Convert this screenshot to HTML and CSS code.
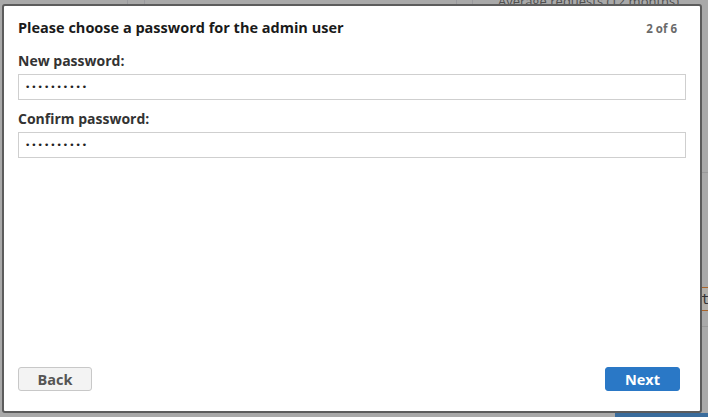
FILE: index.html
```html
<!DOCTYPE html>
<html>

<head>
  <title>Setup wizard</title>
  <link rel="stylesheet" href="styles.css">
</head>

<body>
  <div class="page">
    <div class="page-head">
      <span class="col col-a"></span>
      <span class="col col-b"></span>
      <span class="col col-c"></span>
      <span class="col col-d"></span>
      <span class="head-text">Average requests (12 months)</span>
    </div>
    <div class="page-side">
      <div class="side-row"></div>
      <div class="side-box">to</div>
      <div class="side-row last"></div>
    </div>
    <div class="page-foot"></div>
  </div>

  <div class="dialog">
    <div class="dialog-head">
      <h1>Please choose a password for the admin user</h1>
      <span class="step">2 of 6</span>
    </div>
    <form class="dialog-body">
      <label for="new-password">New password:</label>
      <input type="password" id="new-password" value="abcdefghij">
      <label for="confirm-password">Confirm password:</label>
      <input type="password" id="confirm-password" value="abcdefghij">
    </form>
    <div class="dialog-foot">
      <button class="btn btn-back">Back</button>
      <button class="btn btn-next">Next</button>
    </div>
  </div>
</body>

</html>
```
FILE: styles.css
```css
html {
  overflow: hidden;
}

body {
  margin: 0;
  width: 708px;
  height: 417px;
  overflow: hidden;
  position: relative;
  background: #a9a9a9;
  font-family: 'Open Sans', Lato, sans-serif;
}

/* page behind the wizard, dimmed */
.page {
  height: 417px;
  position: relative;
}

.page-head {
  height: 6px;
  display: flex;
  align-items: flex-end;
  overflow: hidden;
}

.col {
  width: 1px;
  height: 6px;
  background: #9a9a9e;
}

.col-a { margin-left: 127px; }
.col-b { margin-left: 16px; }
.col-c { margin-left: 311px; }
.col-d { margin-left: 15px; }

.head-text {
  margin-left: 25px;
  font-size: 13px;
  line-height: 10px;
  color: #505050;
}

.page-side {
  position: absolute;
  right: 0;
  top: 172px;
  width: 8px;
  display: flex;
  flex-direction: column;
}

.side-row {
  height: 1px;
  background: #999;
  margin-bottom: 115px;
}

.side-row.last {
  margin-bottom: 0;
}

.side-box {
  height: 22px;
  margin-bottom: 15px;
  margin-top: -1px;
  border-top: 1px solid #a8642a;
  border-bottom: 1px solid #a8642a;
  background: #b3b0aa;
  font-family: 'DejaVu Sans Mono', monospace;
  font-size: 14px;
  line-height: 22px;
  color: #333;
  text-indent: 1px;
  overflow: hidden;
}

.page-foot {
  position: absolute;
  left: 615px;
  right: 0;
  bottom: 0;
  height: 4px;
  background: #3a6c9c;
}

/* wizard dialog */
.dialog {
  position: absolute;
  left: 2px;
  top: 4px;
  width: 700px;
  height: 409px;
  background: #fff;
  border: 2px solid #5c5c5c;
  border-radius: 3px;
  display: flex;
  flex-direction: column;
  padding: 0 14px;
  box-sizing: border-box;
}

.dialog-head {
  display: flex;
  justify-content: space-between;
  align-items: baseline;
  padding-top: 12px;
}

.dialog-head h1 {
  margin: 0;
  font-size: 14.5px;
  font-weight: 700;
  color: #1a1a1a;
}

.step {
  font-size: 11.5px;
  font-weight: 700;
  color: #6a6a6a;
  margin-right: 9px;
}

.dialog-body {
  display: flex;
  flex-direction: column;
  flex: 1;
  padding-top: 5px;
}

.dialog-body label {
  font-size: 14px;
  font-weight: 700;
  color: #333;
  margin-top: 9px;
  margin-bottom: 4px;
}

.dialog-body input {
  height: 26px;
  box-sizing: border-box;
  border: 1px solid #cfcfcf;
  border-radius: 0;
  padding: 0 6px;
  font-size: 9px;
  letter-spacing: 1px;
  color: #222;
  font-family: 'DejaVu Sans', sans-serif;
  margin: 0;
}

.dialog-foot {
  display: flex;
  justify-content: space-between;
  padding: 0 6px 20px 0;
}

.btn {
  height: 24px;
  border-radius: 3px;
  font-family: inherit;
  font-size: 14.5px;
  font-weight: 700;
  padding: 0;
}

.btn-back {
  width: 74px;
  background: #f3f3f3;
  border: 1px solid #c8c8c8;
  color: #555;
}

.btn-next {
  width: 75px;
  background: #2a78c6;
  border: 1px solid #2a78c6;
  color: #fff;
}
```
